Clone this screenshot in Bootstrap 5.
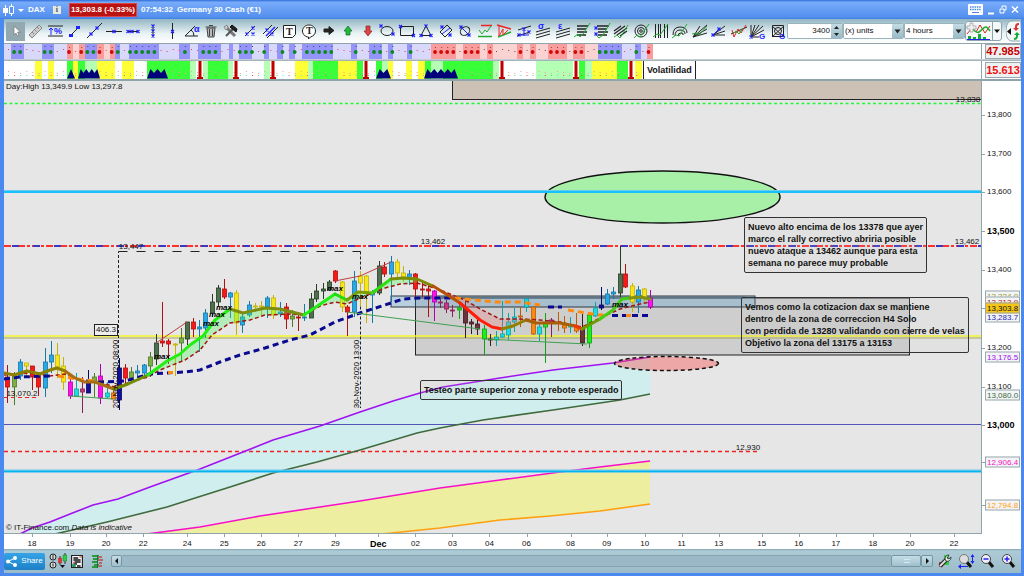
<!DOCTYPE html>
<html lang="es">
<head>
<meta charset="utf-8">
<meta name="viewport" content="width=device-width, initial-scale=1">
<title>DAX - Germany 30 Cash</title>
<link href="https://cdn.jsdelivr.net/npm/bootstrap@5.3.0/dist/css/bootstrap.min.css" rel="stylesheet">
<style>
  body { height: 100vh; min-height: 480px; padding: 0 3px 3px 4px; overflow: hidden; background: #4a8af0; border-left: 0; font-family: "Liberation Sans", Arial, sans-serif; font-size: 8px; line-height: 12px; color: #111; }
  button { border: 0; background: none; padding: 0; }
  .titlebar { height: 19px; margin: 0 -3px 0 -4px; padding: 0 5px 0 3px; background: linear-gradient(#2f6fdc, #78abfa 12%, #5390ee 90%, #3f7ee0); color: #fff; font-weight: 700; }
  .quote { background: #bb1212; border: 1px solid #dd4444; padding: 0 1px; }
  .infobox { width: 8px; height: 8px; background: #e8e8e0; color: #456; line-height: 8px; text-align: center; font-family: "Liberation Serif", serif; }
  .tools { height: 24px; padding: 0 0 0 2px; background: linear-gradient(#93b6c3, #e9f2f4 60%, #fff); }
  .toolset { width: 781px; }
  .toolset button { width: 19px; height: 19px; display: block; }
  .toolset button.active { background: #93a9b1; }
  .toolset svg { display: block; width: 20px; height: 18px; overflow: visible; }
  .field { height: 16px; border: 1px solid #9ab4be; border-radius: 2px; background: #fff; overflow: hidden; }
  .field input, .field select { border: 0; outline: 0; background: #fff; font-size: 8px; line-height: 14px; height: 14px; color: #111; appearance: none; min-width: 0; padding: 0 1px; }
  .arrowbox { width: 11px; height: 14px; flex: none; background: linear-gradient(#c4dbe3, #9abac7); }
  .chartbtn { width: 37px; height: 20px; border: 1px solid #8aa5b0; border-radius: 3px; background: #f4f8f9; }
  .panelrow { display: grid; grid-template-columns: minmax(0, 1fr) 39px; background: #fff; }
  .strip-a { height: 17px; border-top: 1px solid #8fa4ab; border-bottom: 1px solid #c5ced2; }
  .strip-b { height: 21px; border-top: 1px solid #a4b4ba; border-bottom: 2px solid #8fa4ab; }
  .stripval { border: 1px solid #9aa8ae; margin: 1px 0 1px 3px; background: #eef1f2; color: #f01010; font-size: 11px; font-weight: 700; line-height: 14px; text-align: center; }
  .strip-a .stripval { color: #c80000; margin-top: 0; margin-bottom: 0; line-height: 13px; }
  .strip-a .stripsvg, .strip-b .stripsvg { min-width: 0; min-height: 0; border-right: 1px solid #8fa4ab; }
  .stretch { display: block; width: 100%; height: 100%; }
  .vola { position: absolute; left: 65.4%; top: 0; bottom: 0; padding: 0 3px; background: #fff; border: solid #222; border-width: 0 1px; font-size: 9px; font-weight: 700; line-height: 18px; }
  .plot { background: #e6e6e6; border-right: 1px solid #8fa4ab; border-bottom: 1px solid #8fa4ab; }
  .pin { position: absolute; transform: translate(-50%, -50%); white-space: nowrap; line-height: 10px; }
  .maxpin { font-weight: 700; font-style: italic; color: #000; }
  .vert { writing-mode: vertical-rl; transform: translate(-50%, -50%) rotate(180deg); color: #000; }
  .note { position: absolute; padding: 3px 3px; border: 1px solid #333; border-radius: 2px; font-size: 9px; line-height: 12px; font-weight: 700; color: #111; white-space: nowrap; background: rgba(190,190,190,.13); }
  .gauge { border: 1px solid #222; background: #eee; padding: 0 1px; }
  .cap { position: absolute; left: 2px; line-height: 10px; }
  .scale span { position: absolute; left: 5px; transform: translateY(-50%); line-height: 10px; white-space: nowrap; }
  .scale .major { font-size: 9px; font-weight: 700; color: #000; }
  .scale .tag { left: 3px; border: 1px solid #9aa8ae; background: #f2f4f5; padding: 0 1px; line-height: 9px; }
  .scale .live { background: #f5c518; color: #111; }
  .scale i { position: absolute; left: 0; width: 3px; height: 1px; background: #8fa4ab; }
  .dates { height: 15px; }
  .dates span { position: absolute; top: 5px; transform: translateX(-50%); line-height: 10px; }
  .dates .major { font-size: 9px; font-weight: 700; color: #000; }
  .dates i { position: absolute; top: 0; width: 1px; height: 3px; background: #8fa4ab; }
  .dock { height: 24px; background: linear-gradient(#86a5b1, #adcbd7 8%, #9bbbc8); }
  .share { height: 17px; width: 41px; border-radius: 2px; background: linear-gradient(#35a4e6, #1d80c8); color: #fff; }
  .track { height: 12px; background: #9ab8c6; border: solid #86a3b0; border-width: 1px 0; }
  .knob { height: 12px; border: 1px solid #7895a2; border-radius: 2px; background: linear-gradient(#c4dde7, #9fc0ce); }
  .dock svg { display: block; }
</style>
</head>
<body class="d-flex flex-column">

<header class="titlebar d-flex align-items-center flex-shrink-0">
  <svg width="21" height="14" viewBox="0 0 21 14" aria-hidden="true"><path d="M2.500 2v11M8.500 1v12" stroke="#fff"/><path d="M0 5h5v5H0z" fill="#fff"/><path d="M6.500 3.500h4v7h-4z" fill="#5b97f2" stroke="#fff"/><path d="M15 6h6l-3 3z" fill="#fff"/></svg>
  <span class="ms-1">DAX</span>
  <span class="infobox ms-2">i</span>
  <span class="quote ms-2">13,303.8 (-0.33%)</span>
  <span class="ms-1">07:54:32</span><span class="ms-1">Germany 30 Cash (€1)</span>
  <div class="ms-auto d-flex align-items-center gap-1">
    <button aria-label="Teclado"><svg class="d-block" width="15" height="11" viewBox="0 0 15 11"><rect width="15" height="11" rx="1" fill="#fff"/><path d="M2 3h11M2 5.500h11" stroke="#4a86e8" stroke-width="1.500" stroke-dasharray="1.500 .8"/><path d="M4 8.500h7" stroke="#4a86e8"/></svg></button>
    <button aria-label="Minimizar"><svg class="d-block" width="8" height="10"><path d="M1 8.500h6" stroke="#fff" stroke-width="2"/></svg></button>
    <button aria-label="Restaurar"><svg class="d-block" width="8" height="9"><path d="M3 3V1h4v4H5M1 4h4v4H1z" fill="none" stroke="#fff"/></svg></button>
    <button aria-label="Cerrar"><svg class="d-block" width="8" height="9"><path d="M1 1.500l6 6M7 1.500l-6 6" stroke="#fff" stroke-width="1.500"/></svg></button>
  </div>
</header>

<div class="tools d-flex align-items-center flex-shrink-0">
  <div class="toolset d-flex justify-content-between flex-shrink-0" id="toolset" role="toolbar" aria-label="Herramientas de dibujo"></div>
  <div class="field d-flex" style="width:56px"><input class="flex-grow-1 text-end w-100" value="3400" aria-label="Número de unidades"><svg class="arrowbox" viewBox="0 0 11 14"><path d="M3 5l2.500-3L8 5zM3 9l2.500 3L8 9z" fill="#222"/></svg></div>
  <label class="field d-flex" style="width:61px"><select class="flex-grow-1" aria-label="Unidades"><option>(x) units</option></select><svg class="arrowbox" viewBox="0 0 11 14"><path d="M2.500 5.500h6l-3 4z" fill="#222"/></svg></label>
  <label class="field d-flex" style="width:61px"><select class="flex-grow-1" aria-label="Periodo"><option>4 hours</option></select><svg class="arrowbox" viewBox="0 0 11 14"><path d="M2.500 5.500h6l-3 4z" fill="#222"/></svg></label>
  <button class="chartbtn flex-shrink-0" aria-label="Indicadores"><svg class="d-block" width="35" height="18" viewBox="0 0 35 18"><path d="M1 12l5-6 4 4 4-7 5 8 5-7" fill="none" stroke="#d22"/><path d="M1 6c5-5 7 7 12 4s6-9 11-1" fill="none" stroke="#2a2" stroke-width="1.500"/><path d="M4 1h3v3h3v3H7v3H4V7H1V4h3z" fill="#eee" stroke="#999" stroke-width=".7"/><path d="M2 17v-3h3v3zM7 17v-2h3v2zM12 17v-5h3v5zM17 17v-2h3v2z" fill="#1a3"/><path d="M1 17.500h23" stroke="#22e"/><path d="M26.500 0v18" stroke="#8aa5b0"/><path d="M28 7.500h6l-3 3.500z" fill="#111"/></svg></button>
  <button class="flex-shrink-0 ms-1" aria-label="Comprar y vender"><svg class="d-block" width="14" height="22" viewBox="0 0 14 22"><path d="M14 1H6C2 1 0 5 0 11s2 10 6 10h8" fill="#f4f8f9" stroke="#8aa5b0"/><path d="M5 8v7l-4-3.500z" fill="#111"/><path d="M13 3c-4 0-4 3-4 5H7l3 3 3-3h-2c0-2 0-3 2-3z" fill="#d33"/><path d="M8 20c4 0 4-3 4-5h2l-3-3-3 3h2c0 2 0 3-2 3z" fill="#1a3"/></svg></button>
</div>

<section class="panelrow strip-a flex-shrink-0">
  <div class="stripsvg"><svg id="stripA" class="stretch" viewBox="4 44 977 15" preserveAspectRatio="none"></svg></div>
  <div class="stripval">47.985</div>
</section>
<section class="panelrow strip-b flex-shrink-0">
  <div class="stripsvg position-relative"><svg id="stripB" class="stretch" viewBox="4 61 977 18" preserveAspectRatio="none"></svg><div class="vola">Volatilidad</div></div>
  <div class="stripval">15.613</div>
</section>

<main class="panelrow flex-grow-1" style="min-height:0">
  <div class="plot position-relative overflow-hidden" id="plot">
    <svg id="chart" class="stretch position-absolute top-0 start-0" viewBox="4 81 977 452" preserveAspectRatio="none"></svg>
    <div class="cap" style="top:1px">Day:High 13,349.9 Low 13,297.8</div>
    <div class="cap bottom-0">© IT-Finance.com <em>Data is indicative</em></div>
  </div>
  <div class="scale position-relative" id="scale"></div>
</main>
<div class="panelrow dates flex-shrink-0"><div class="position-relative" id="dates"></div></div>

<footer class="dock d-flex align-items-center flex-shrink-0">
  <button class="share d-flex align-items-center justify-content-center gap-1 flex-shrink-0"><svg width="11" height="11" viewBox="0 0 11 11"><path d="M9 2L2 5.500 9 9" fill="none" stroke="#fff"/><circle cx="9" cy="2" r="2" fill="#fff"/><circle cx="2" cy="5.500" r="2" fill="#fff"/><circle cx="9" cy="9" r="2" fill="#fff"/></svg>Share</button>
  <button class="ms-1" aria-label="Tipo de gráfico"><svg width="18" height="16" viewBox="0 0 18 16"><circle cx="4" cy="4" r="3" fill="#ddd" stroke="#222"/><circle cx="4" cy="12" r="3" fill="#ddd" stroke="#222"/><path d="M3 3h2M3 5h2M4 10.500v3" stroke="#222"/><path d="M11 3v9M16 0v11" stroke="#333"/><path d="M9.500 5h3v5h-3z" fill="#e33" stroke="#922" stroke-width=".5"/><path d="M14 2h4v6h-4z" fill="#3c4" stroke="#173" stroke-width=".5"/><path d="M11 12h5l-2.500 3z" fill="#111"/></svg></button>
  <button class="ms-1" aria-label="Informe"><svg width="12" height="13" viewBox="0 0 10 13" preserveAspectRatio="none"><path d="M.5 .5h9v12h-9z" fill="#fff" stroke="#222"/><path d="M2 3h4M2 5h6M3 7h5M2 9h3M5 11h3" stroke="#111" stroke-width="1.300"/><path d="M7 2h2M2 7l1 1" stroke="#c33"/><path d="M1 9h3v3H1z" fill="#296"/></svg></button>
  <button class="ms-2" aria-label="Libro de órdenes"><svg width="12" height="13" viewBox="0 0 12 13"><path d="M1 1h7M2 4h6M1 7h6M3 10h5M1 12h6" stroke="#2a9a3a" stroke-width="2"/><path d="M7 2h4M7 5h5M8 8h3M7 11h4" stroke="#b66" stroke-width="2"/><path d="M6.500 0v13" stroke="#174"/></svg></button>
  <button class="knob ms-2 flex-shrink-0" aria-label="Desplazar a la izquierda"><svg width="9" height="10"><path d="M6 2v6L3 5z" fill="#111"/></svg></button>
  <div class="track flex-grow-1"></div>
  <div class="knob flex-shrink-0" style="width:30px"><svg width="28" height="10"><path d="M12 3.500h6M12 6.500h6" stroke="#d8eaf0"/></svg></div>
  <button class="knob flex-shrink-0" aria-label="Desplazar a la derecha"><svg width="10" height="10"><path d="M4 2v6l3-3z" fill="#111"/></svg></button>
  <div class="d-flex gap-1 ms-1 me-1">
    <button aria-label="Ajustes"><svg width="16" height="16" viewBox="0 0 16 16"><path d="M7 2h5v10H7z" fill="#3c4"/><path d="M2 9h4v5H2z" fill="#c44"/><path d="M3 13l6-6" stroke="#222" stroke-width="4"/><path d="M3 13l6-6" stroke="#ddd" stroke-width="2"/><path d="M8 6c0-3 2-4 4-4l-2 3 2 1 2-2c0 3-2 5-5 4z" fill="#eee" stroke="#222" stroke-width=".8"/></svg></button>
    <button aria-label="Autoajustar"><svg width="18" height="16" viewBox="0 0 18 16"><path d="M9 8l5 6" stroke="#111" stroke-width="3"/><circle cx="7" cy="6" r="4.500" fill="#ddd" stroke="#777"/><path d="M15.500 2v7M3 13.500h8" stroke="#22e"/><path d="M13.500 4l2-3 2 3zM13.500 8l2 3 2-3zM4 11l-3 2.500L4 16z" fill="#22e"/></svg></button>
    <button aria-label="Alejar"><svg width="17" height="16" viewBox="0 0 17 16"><path d="M9 8l5 6" stroke="#111" stroke-width="3"/><circle cx="7" cy="6" r="4.500" fill="#eef" stroke="#444"/><path d="M4.500 6h5" stroke="#22e" stroke-width="1.500"/></svg></button>
    <button aria-label="Acercar"><svg width="17" height="16" viewBox="0 0 17 16"><path d="M9 8l5 6" stroke="#111" stroke-width="3"/><circle cx="7" cy="6" r="4.500" fill="#eef" stroke="#444"/><path d="M4.500 6h5M7 3.500v5" stroke="#22e" stroke-width="1.500"/></svg></button>
  </div>
</footer>

<script src="https://cdn.jsdelivr.net/npm/bootstrap@5.3.0/dist/js/bootstrap.bundle.min.js"></script>
<script>
const K = '#222', B = '#22f', R = '#e22', G = '#2a3';
const p = (d, s = K, w = 1, f = 'none') => `<path d="${d}" stroke="${s}" stroke-width="${w}" fill="${f}"/>`;
const x = (...pts) => p(pts.map(([a, b]) => `M${a - 1.5} ${b - 1.5}l3 3m0-3l-3 3`).join(''), B, 1.2);
const t = (s, a, b, c, z, e = '') => `<text x="${a}" y="${b}" fill="${c}" font-size="${z}" font-weight="700" ${e}>${s}</text>`;

// Drawing tools, left to right
const tools = [
  ['Cursor', p('M8 4v9l2-2 1.500 3 1.500-1-1.500-3h3z', '#777', .7, '#fff')],
  ['Regla', p('M3 13L13 3l3 3L6 16z', '#888', 1, '#ccc') + p('M6 10l2 2M8.500 7.500l2 2M11 5l2 2', '#888')],
  ['Porcentaje', p('M3 4h15M3 14h15') + p('M6 13V6m-2 2l2-2 2 2', B) + t('%', 9, 12, B, 9)],
  ['Segmento', p('M6 13l7-7') + p('M5 13h2v1H5zM12 5h2v1h-2z', B, 2)],
  ['Recta', p('M3 16L18 1') + x([7, 12], [13, 6])],
  ['Horizontal', p('M2 9.500h16') + x([10, 9.5])],
  ['Semirrecta', p('M5 9.500h10') + x([5, 9.5], [9, 9.5], [15, 9.5])],
  ['Segmento vertical', p('M10 4v11') + x([10, 4], [10, 9], [10, 14])],
  ['Vertical', p('M10.500 1v16') + x([10.5, 9.5])],
  ['Ángulo', p('M3 14h13M3 14L13 4M9 8q3 2 3 6') + t('α', 12, 10, B, 9)],
  ['Eliminar', p('M6 6h8l-1 9H7z', '#444', 1, '#bbb') + p('M4.500 5h11M8 3.500h4M8.500 7v7M11.500 7v7', '#444')],
  ['Configurar', p('M5 5l9 9', '#777', 3) + p('M5 14l8-8', '#555', 2) + p('M11 3l5 4-1 3-6-5z', '#111', 1, '#222') + p('M3 5l3-2 1 3-2 2z', '#888', 1, '#ccc')],
  ['Puntos', p('M5 14l10-10') + x([7, 12], [13, 6], [13, 12])],
  ['Paralelas', p('M3 12l9-9M7 16L18 5') + p('M6 14l9-9', B, 1.5) + x([7, 8], [12, 12])],
  ['Texto', p('M4.500 3.500h12v9l-3 3h-9z', K, 1, '#fff') + t('T', 7, 13, K, 10, 'font-family="Liberation Serif"')],
  ['Bocadillo', p('M10 3c4 0 6.500 3 6.500 6s-2 5-5 6l-2 2v-2C6 15 3.500 12 3.500 9S6 3 10 3z', K, 1, '#fff') + t('T', 7, 12, K, 10, 'font-family="Liberation Serif"')],
  ['Flecha', p('M5 7h5V4.500l5 4-5 4V10H5z', K, 1, K)],
  ['Flecha arriba', p('M8 13V9H6l4-5 4 5h-2v4z', '#163', .7, '#2b3')],
  ['Flecha abajo', p('M8 4v5H6l4 5 4-5h-2V4z', '#822', .7, '#d44')],
  ['Elipse', '<ellipse cx="10" cy="9" rx="6" ry="4.500" fill="none" stroke="#222"/>' + x([4, 4], [16, 12])],
  ['Rectángulo', p('M3.500 4.500h13v9h-13z') + x([3.5, 4.5], [16.5, 13.5])],
  ['Triángulo', p('M10 4l5 9.500H5z') + x([10, 4], [5, 13.5], [15, 13.5])],
  ['Rombo', p('M11 3l5 5-7 7-5-5z') + p('M6 12l8-6', B) + x([6, 5], [14, 13])],
  ['Círculo', '<ellipse cx="10" cy="9" rx="5" ry="4" fill="none" stroke="#222" transform="rotate(-35 10 9)"/>' + p('M6 5l8 8', B) + x([6, 5], [14, 13])],
  ['Soportes', p('M6 3.500h11', R, 1.5) + p('M3 14.500h14', G, 1.5) + p('M4 8l3 4 3-4 2 2 4-6', G)],
  ['Triángulos', p('M3 3l14 4', R, 1.5) + p('M4 15l13-5', G, 1.5) + p('M5 4v10l4-7v6l5-5', R)],
  ['Canal', p('M4 8l13-4M3 14l13-4') + p('M10 7v7M5 13h10', B) + x([5, 13], [15, 10], [10, 7])],
  ['Desviación', p('M3 10l14-4M3 13l14-4M3 16l14-4') + t('σ', 5, 7, B, 9)],
  ['Error estándar', p('M3 10l14-4M3 13l14-4M3 16l14-4') + t('ε', 5, 7, B, 9)],
  ['Retroceso', p('M5 4h11M5 7h9M5 10h10M5 13h9', K, 1.4) + p('M2 15l4-3 2 3 3-3 7-11', G)],
  ['Extensión', p('M5 4h12M6 7h9M6 10h10M6 13h9', K, 1.4) + p('M4 13l3 3 4-3 7-12', G) + x([4, 6], [4, 12])],
  ['Canal Fibonacci', p('M3 9l7-5M3 12l11-8M6 13l10-7M9 14l7-5', K, 1.2) + p('M3 15l3-2 3 3 8-13', G)],
  ['Círculos Fibonacci', '<circle cx="10" cy="9" r="6" fill="none" stroke="#222"/><circle cx="10" cy="9" r="3.500" fill="none" stroke="#222"/><circle cx="10" cy="9" r="1.300" fill="none" stroke="#222"/>' + p('M3 16l3-3 3 2 9-13', G)],
  ['Zonas temporales', p('M4.500 2v14M7.500 2v14M9.500 2v14M13.500 2v14M16.500 2v14') + p('M2 15l4-3 3 1 8-11', G)],
  ['Arcos', p('M3 13q0-8 7-8t7 6M5 14q0-6 5-6t5 4M8 14q0-3 3-3t2 2') + p('M2 16l4-3 3 1 8-12', G)],
  ['Abanico', p('M3 15L17 3M3 15L17 7M3 15l14-4M3 15L10 4') + p('M2 12l4-1 3 2 8-9', G)],
  ['Tridente', p('M4 13L16 4M4 13h12M4 13l12-4') + p('M4 13l6-6', B) + x([4, 13], [10, 7])],
  ['Zigzag', p('M2 12L18 5') + p('M3 8l2 7 4-8 3 4 5-8', R) + p('M4 12l3-3 3 3 4-6', G)],
  ['Abanico Gann', p('M3 15V3M3 15L7 3M3 15L11 3M3 15L15 4M3 15l13-7M3 15h8') + x([3, 15]) + t('G', 11, 17, B, 8)],
  ['Caja Gann', p('M4.500 3.500h11v11h-11zM4 4l12 11M16 4L4 15') + '<circle cx="10" cy="9" r="3.500" fill="none" stroke="#222"/>' + t('G', 11, 17, B, 8)]
];
document.getElementById('toolset').innerHTML = tools.map(([n, s], i) =>
  `<button class="${i ? '' : 'active'}" aria-label="${n}"><svg viewBox="0 0 20 18">${s}</svg></button>`).join('');

const rect = (a, y, b, z, f, e = '') => `<rect x="${a}" y="${y}" width="${b - a}" height="${z - y}" fill="${f}" ${e}/>`;

// First indicator strip: background zones and signal dots
const blue = [[11,24],[42,54],[85,97],[115,120],[129,159],[179,190],[198,221],[229,233],[239,252],[264,269],[277,283],[289,295],[302,333],[351,357],[369,382],[388,393],[407,412],[598,622],[635,641]];
const pink = [[67,73],[79,85],[97,104],[110,115],[431,456],[463,480],[487,493],[517,523],[530,536],[548,567],[573,585],[647,653]];
let a = rect(4, 44, 982, 59, '#fff') + rect(4, 44, 647, 59, '#d8d8fa') + rect(67, 44, 115, 59, '#fbd2d2') + rect(431, 44, 598, 59, '#fbd2d2');
blue.forEach(([m, n]) => a += rect(m, 44, n, 59, '#9494fa'));
pink.forEach(([m, n]) => a += rect(m, 44, n, 59, '#fa9c9c'));
for (let i = 0; i < 106; i++) {
  const c = 8 + i * 6.1, hit = z => z.some(([m, n]) => c >= m && c <= n);
  if (hit(blue)) a += `<circle cx="${c}" cy="52" r="1.900" fill="#0a8a1a"/>` + rect(c, 46, c + 1, 47, '#445');
  else if (hit(pink)) a += `<circle cx="${c}" cy="52" r="1.900" fill="#d00808"/>` + rect(c, 47, c + 1, 48, '#844');
  else a += rect(c, 49 + i % 3, c + 1, 50 + i % 3, c > 431 && c < 598 ? '#555' : '#e44');
}
document.getElementById('stripA').innerHTML = a;

// Volatility strip
const Y = '#ffff38', L = '#38ff38', P = '#b4ffb4';
let b = rect(4, 61, 982, 79, '#fff');
[[35,42,Y],[48,54,Y],[67,73,L],[73,78,Y],[78,85,L],[85,97,P],[97,115,Y],[122,134,Y],[147,190,L],[190,196,P],[203,208,P],[208,228,L],[228,233,P],[264,270,P],[295,308,Y],[308,313,P],[313,338,L],[338,357,Y],[357,363,L],[376,382,L],[382,388,P],[388,393,Y],[406,412,Y],[418,425,Y],[425,431,L],[431,443,P],[443,493,L],[493,499,P],[536,573,P],[579,585,L],[585,592,P],[592,617,Y],[617,628,L],[635,642,Y]].forEach(([m, n, c]) => b += rect(m, 61, n, 79, c));
for (let i = 0; i < 104; i++) b += rect(8 + i * 6.1, 75, 9 + i * 6.1, 76, ['#5dd', '#e55', '#5c8'][i % 3]) + rect(8 + i * 6.1, 71 + i % 3, 9 + i * 6.1, 72 + i % 3, '#f99');
[[67,75,1],[78,100,4],[147,168,3],[376,391,2],[424,458,5]].forEach(([m, n, k]) => {
  let d = `M${m} 78.500`; const w = (n - m) / k;
  for (let i = 0; i < k; i++) d += `L${m + w * (i + .5)} 69L${m + w * (i + 1)} ${i < k - 1 ? 73 : 78.5}`;
  b += p(d + 'z', 'none', 0, '#00007a');
});
[200,236,273,366,502,576,631].forEach(c => b += rect(c - 1.5, 61, c + 1.5, 79, '#c00000') + rect(c - 3, 77, c + 3, 79, '#c00000'));
document.getElementById('stripB').innerHTML = b;

// Price chart: moving averages and bands
const ln = (pts, s, w, e = '') => `<polyline points="${pts}" fill="none" stroke="${s}" stroke-width="${w}" ${e}/>`;
const area = (pts, f) => `<polygon points="${pts}" fill="${f}"/>`;
const rev = s => s.split(' ').reverse().join(' ');
const purple = '20,534 32,528 50,522 70,514 93,505 118,499 150,487 200,469 243,452 273,440 320,426 360,412 393,401 420,393 443,387 500,378 553,370 613,363 650,357';
const forest = '55,534 107,522 143,513 167,507 192,499 230,487 273,473 317,462 360,450 417,433 440,428 483,420 553,410 620,400 650,394';
const magenta = '147,534 200,527 260,516 320,507 360,501 440,488 500,480 560,472 600,467 650,461';
const orange = '382,534 440,528 500,520 550,516 600,511 650,504';
let s = '';
s += `<rect x="452.500" y="78" width="540" height="21.500" fill="#cdc0b4" stroke="#222"/>`;
s += `<ellipse cx="662.500" cy="197" rx="117.500" ry="26" fill="#a8efa8" stroke="#111" stroke-width="1.500"/>`;
s += area(purple + ' ' + rev(forest), '#d0eeee') + area(magenta + ' ' + rev(orange), '#eeeea0');
s += ln('4,103.500 982,103.500', '#20f838', 1.5, 'stroke-dasharray="3 2.500"');
s += ln('4,191.500 982,191.500', '#68ccf0', 3) + ln('4,192 982,192', '#00bcff', 1.6);
s += ln('4,246 982,246', '#ff3030', 2, 'stroke-dasharray="7 2 3 2"') + ln('12,246 982,246', '#3838c0', 2, 'stroke-dasharray="7 14"');
s += `<rect x="415.500" y="298" width="494" height="57" fill="rgba(0,0,0,.1)" stroke="#222"/>`;
s += `<rect x="391" y="296" width="364" height="11" fill="rgba(70,150,210,.28)" stroke="#2c3840"/>` + rect(415, 296, 745, 298, 'rgba(60,80,100,.3)');
s += ln('4,336 982,336', '#f4f42a', 1.3) + ln('4,338 982,338', '#a8a858', 1.2);
s += ln('4,424.500 982,424.500', '#5454b8', 1);
s += ln('4,451.500 735,451.500 760,451.500', '#f02020', 1.4, 'stroke-dasharray="4 3"');
s += ln(purple, '#a012f0', 1.6) + ln(forest, '#3e6a3e', 1.6) + ln(magenta, '#f810c8', 1.6) + ln(orange, '#ffa010', 1.6);
s += ln('4,471 982,471', '#70c8f0', 3) + ln('4,471.500 982,471.500', '#00b4ee', 1.4);
s += `<ellipse cx="666.500" cy="363.500" rx="52" ry="7" fill="rgba(250,80,80,.42)" stroke="#111" stroke-width="1.500" stroke-dasharray="4 3"/>`;
s += ln('118.500,408 118.500,251.500', '#222', 1, 'stroke-dasharray="3 2"') + ln('118.500,251.500 360.500,251.500', '#222', 1, 'stroke-dasharray="9 9"') + ln('360.500,251.500 360.500,408', '#222', 1, 'stroke-dasharray="3 2"');
s += ln('4,397.500 38,397.500', '#f02020', 1, 'stroke-dasharray="4 3"');

// Candles: x, body top, body bottom, high, low, colour
const tone = { r:'#f81818', o:'#7fae48', b:'#28a8e4', y:'#f4e818', m:'#ff10ee', c:'#18e0e0', p:'#c83a80', n:'#10109a', q:'#f88a10', d:'#4e704e', w:'#6a343c', g:'#18f018' };
const edge = { r:'#b01010', o:'#4c7a28', b:'#1478a8', y:'#c8b000', m:'#b000a8', c:'#10a0a8', p:'#8a2058', n:'#080868', q:'#b85c08', d:'#243c24', w:'#3c181e', g:'#10a018' };
`7,377,387,365,403,r;14,376,387,372,405,o;20,362,376,359,380,b;26,363,366,363,378,y;32,366,377,366,390,r;38,373,387,372,396,r;45,362,388,348,397,b;51,355,362,341,373,b;57,355,367,343,378,y;63,366,382,357,390,y;70,382,396,377,399,m;76,389,396,373,397,c;82,389,392,377,413,p;88,380,393,370,393,n;94,377,382,373,397,o;100,376,398,364,404,m;107,393,397,382,398,c;113,393,399,387,399,q;119,368,400,358,410,n;125,368,378,364,383,r;131,372,378,367,381,o;137,371,373,365,378,b;144,365,373,364,377,b;150,357,366,352,377,o;156,343,359,334,365,d;162,341,343,302,347,r;168,341,344,339,364,r;175,344,345,343,376,y;181,338,343,328,362,o;187,322,339,322,345,d;193,322,329,318,337,r;199,327,329,320,352,b;205,313,328,309,338,b;212,302,313,294,317,d;218,288,302,285,307,d;224,289,297,279,299,r;230,293,297,292,318,b;236,293,323,290,335,y;242,317,325,313,333,b;249,305,315,301,317,b;255,306,307,303,312,y;261,306,307,301,315,y;267,298,307,296,318,b;273,298,315,295,319,y;280,312,314,302,317,b;286,307,319,303,329,r;292,316,319,310,327,o;298,317,318,315,331,r;304,317,318,304,321,b;311,299,318,293,318,d;316,291,299,284,302,d;323,289,291,283,299,d;329,282,290,280,291,d;335,271,281,270,283,r;342,282,307,281,312,y;347,307,312,305,336,r;354,281,312,271,317,b;360,276,283,271,306,y;366,276,293,275,323,y;372,293,295,290,323,b;379,266,293,261,295,d;384,267,274,262,277,r;391,262,274,256,302,b;397,262,273,259,277,y;403,273,277,266,282,y;409,274,278,270,285,b;415,274,289,273,297,r;422,289,290,280,297,r;428,289,291,285,317,r;434,291,302,290,321,m;440,302,303,298,308,p;446,303,309,300,313,p;452,310,311,305,317,p;459,308,310,302,319,g;465,308,323,298,338,w;471,322,324,319,334,w;477,324,329,319,335,w;484,329,339,325,355,g;490,339,340,334,346,w;496,337,340,331,346,c;502,334,337,301,338,c;508,322,335,313,340,c;514,317,322,308,332,c;520,316,317,307,327,q;526,299,307,298,312,c;533,307,334,307,335,q;539,327,334,323,341,c;545,322,327,313,363,g;551,320,322,318,337,p;558,322,323,312,331,q;564,325,328,316,333,q;570,325,327,317,333,c;576,327,331,313,333,q;582,329,343,314,346,w;589,315,343,313,348,g;595,308,316,302,317,c;601,305,308,287,310,n;607,294,304,289,305,b;613,292,294,287,299,b;620,274,293,246,297,d;625,274,287,264,288,r;632,286,302,283,312,y;638,290,302,286,313,b;644,289,297,288,302,y;650,298,307,290,309,m`.split(';').forEach(q => {
  const [c, u, v, h, l, k] = q.split(','), X = +c + .5;
  s += ln(`${X},${h} ${X},${l}`, edge[k], 1) + `<rect x="${X - 2}" y="${u}" width="4" height="${v - u}" fill="${tone[k]}" stroke="${edge[k]}" stroke-width=".8"/>`;
});
const sig = '148,377 160,370 185,360 200,350 212,335 230,323 250,320 265,315 290,314 304,315 320,306 335,302 347,304 365,296 385,288 400,284 417,283', sig2 = '435,288 450,294 465,300 482,310 500,319 520,319', sig3 = '582,327 600,318 620,309 640,304 650,302';
s += area('148,375 167,361 180,354 190,345 203,336 215,320 230,309 243,313 265,308 304,315 335,294 347,300 358,292 372,293 391,279 417,279 ' + rev(sig), 'rgba(70,250,90,.32)');
s += area('433,286 460,303 480,320 492,327 502,329 526,320 ' + rev(sig2), 'rgba(250,110,110,.25)');
s += ln('4,375 30,373 50,376 65,374 84,381 103,383 114,387 ' + sig + ' ' + sig2 + ' 540,320 560,322 ' + sig3, '#a01414', 1.5, 'stroke-dasharray="4 2.500"');
const sq = 'stroke-dasharray="6 4"';
s += ln('4,379 20,377 50,376', '#0a0a90', 3, sq) + ln('58,376 84,380 105,382', '#ff8a10', 3, sq) + ln('98,382 125,381 150,374 165,373 185,372 200,370 220,362 240,355 265,348 290,340 310,335 335,322 360,313 385,305 403,299 420,298 452,298', '#0a0a90', 3, sq);
s += ln('455,298 475,300 495,302 520,302 540,305', '#ff8a10', 3, sq) + ln('548,307 562,307', '#0a0a90', 3, sq) + ln('568,310 598,315 608,315', '#ff8a10', 3, sq) + ln('612,315.500 650,315.500', '#0a0a90', 3, sq) + ln('168,372.500 173,372.500', '#ff8a10', 3) + ln('626,315.500 631,315.500', '#ff8a10', 3);
[['4,373 14,375 27,371 40,374 50,370 57,368 65,371', '#8c8000'], ['65,371 75,378 84,382 95,382 103,385 114,389', '#a86c14'], ['114,389 128,384 148,375', '#708c00'], ['148,375 167,361 180,354 190,345 203,336 215,320 230,309', '#22ee10'], ['230,309 243,313 265,308 280,309 304,315', '#7c8c10'], ['304,315 335,294', '#22ee10'], ['335,294 347,300', '#22d810'], ['347,300 358,292 372,293', '#7c9c00'], ['372,293 391,279', '#30dd10'], ['391,279 403,278 417,279 433,286', '#7c8c00'], ['433,286 446,294 460,303', '#b45008'], ['460,303 480,320 492,327 502,329', '#ff1c08'], ['502,329 513,326 526,320', '#908000'], ['526,320 536,323 560,323 575,326', '#a86008'], ['575,326 582,329', '#f03808'], ['582,329 600,319', '#6c9c00'], ['600,319 613,310 622,299 630,298', '#40d010'], ['630,298 640,297 650,299', '#809010']].forEach(([q, c]) => s += ln(q, c, 3, 'stroke-linejoin="round" stroke-linecap="round"'));
s += ln('156,343 187,322', '#c04040', 1) + ln('335,281 360,276 391,262', '#c04040', 1) + ln('70,396 113,399', '#40a050', 1) + ln('347,312 480,329', '#40a050', 1) + ln('484,339 587,344', '#40a050', 1);
document.getElementById('chart').innerHTML = s;

// Text over the plot, placed by chart coordinate
const px = v => ((v - 4) / 9.77).toFixed(2) + '%', py = v => ((v - 81) / 4.52).toFixed(2) + '%';
const pins = [[968,100,'13,838'],[967,242,'13,462'],[433,242,'13,462'],[131,247,'13,447'],[748,448,'12,930'],[22,394,'13,070.2'],[106,330,'406.3','gauge'],[116,374,'20-Nov-2020 08:00','vert'],[357,374,'30-Nov-2020 13:00','vert'],
  ...[[162,357],[211,324],[217,315],[224,308],[335,289],[360,297],[620,305]].map(([m, n]) => [m, n, 'max', 'maxpin'])];
const notes = [[744,217,'Nuevo alto encima de los 13378 que ayer<br>marco el rally correctivo abriria posible<br>nuevo ataque a 13462 aunque para esta<br>semana no parece muy probable'],[741,297,'Vemos como la cotizacion dax se mantiene<br>dentro de la zona de correccion H4 Solo<br>con perdida de 13280 validando con cierre de velas<br>Objetivo la zona del 13175 a 13153'],[420,380,'Testeo parte superior zona y rebote esperado']];
document.getElementById('plot').insertAdjacentHTML('beforeend',
  pins.map(([m, n, w, c = '']) => `<span class="pin ${c}" style="left:${px(m)};top:${py(n)}">${w}</span>`).join('') +
  notes.map(([m, n, w]) => `<div class="note" style="left:${px(m)};top:${py(n)}">${w}</div>`).join(''));

// Price scale and date axis
document.getElementById('scale').innerHTML =
  [115,154,192,231,270,308,347,386,424,461,504].map(v => `<i style="top:${py(v)}"></i>`).join('') +
  [[115,'13,800'],[154,'13,700'],[192,'13,600'],[231,'13,500','major'],[270,'13,400'],[347,'13,200'],[386,'13,100'],[424,'13,000','major'],
   [296,'13,324.0','tag','#9a9a30'],[302,'13,313.9','tag','#b02020'],[316,'13,283.7','tag','#2828b0'],[307,'13,303.8','tag live'],[356,'13,176.5','tag','#a012f0'],[394,'13,080.0','tag','#3e6a3e'],[461,'12,906.4','tag','#f810c8'],[504,'12,794.8','tag','#ffa010']]
  .map(([v, w, c = '', k]) => `<span class="${c}" style="top:${py(v)}${k ? ';color:' + k : ''}">${w}</span>`).join('');
document.getElementById('dates').innerHTML =
  [[32,18],[70,19],[106,20],[143,22],[187,24],[224,25],[261,26],[298,27],[335,29],[378,'Dec'],[415,'02'],[452,'03'],[489,'04'],[526,'06'],[570,'08'],[606,'09'],[644,10],[681,11],[718,13],[761,15],[798,16],[835,17],[872,18],[909,20],[953,22]]
  .map(([v, w]) => `<i style="left:${px(v)}"></i><span class="${w === 'Dec' ? 'major' : ''}" style="left:${px(v)}">${w}</span>`).join('');
</script>
</body>
</html>
